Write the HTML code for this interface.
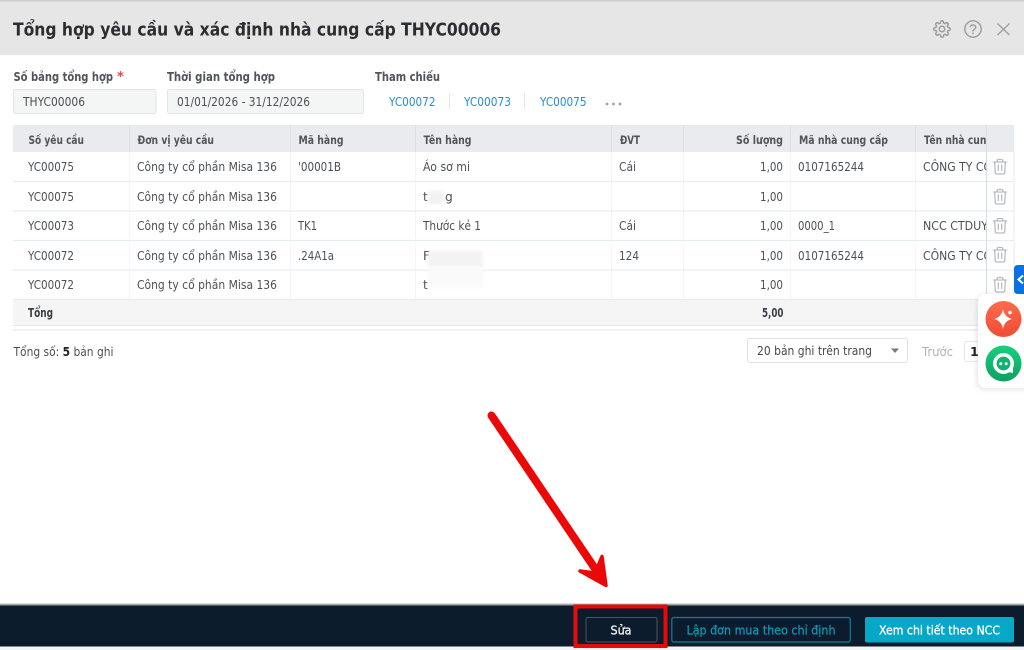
<!DOCTYPE html>
<html lang="vi"><head><meta charset="utf-8"><title>Tổng hợp yêu cầu</title>
<style>
html,body{margin:0;padding:0;background:#fff;overflow:hidden}
svg{display:block}
text{font-family:"DejaVu Sans","Liberation Sans",sans-serif;font-size:12.3px;fill:#4c5157}
.h{font-weight:bold;fill:#50555b;font-size:11.500px}
.l{font-weight:bold;fill:#50555b;font-size:12px}
.b{font-weight:bold;fill:#3a3f45}
.a{fill:#2a8bcb}
.v{stroke:#e9edf1;stroke-width:1;stroke-dasharray:1 1}
.r{stroke:#e6edf0;stroke-width:1.300}
</style></head><body>
<svg width="1024" height="650" viewBox="0 0 1024 650" xmlns="http://www.w3.org/2000/svg">
<defs>
<clipPath id="c"><rect x="900" y="125" width="86" height="180"/></clipPath>
<filter id="bl" x="-30%" y="-30%" width="160%" height="160%"><feGaussianBlur stdDeviation="1.500"/></filter>
<filter id="sh" x="-40%" y="-20%" width="180%" height="140%"><feDropShadow dx="-1" dy="1" stdDeviation="3" flood-color="#000" flood-opacity=".12"/></filter>
<linearGradient id="rg" x1="0" y1="0" x2="0" y2="1"><stop offset="0" stop-color="#ff6b4c"/><stop offset="1" stop-color="#ee4c35"/></linearGradient>
<linearGradient id="gg" x1="0" y1="0" x2="0" y2="1"><stop offset="0" stop-color="#12d27c"/><stop offset="1" stop-color="#10a062"/></linearGradient>
<g id="tr" fill="none" stroke="#b9bcbf" stroke-width="1.300" stroke-linecap="round" stroke-linejoin="round"><path d="M-6.500-5H6.500M-2.800-5V-6.300Q-2.800-7.500-1.500-7.500H1.500Q2.800-7.500 2.800-6.300V-5M-5.300-5-4.800 5.200Q-4.700 7-3 7H3Q4.700 7 4.800 5.200L5.300-5M-1.700-2V3.500M1.700-2V3.500"/></g>
</defs>
<rect width="1024" height="650" fill="#fff"/>
<!-- header -->
<rect width="1024" height="55" fill="#e6e6e6"/>
<rect width="1024" height="1.500" fill="#cfcfcf"/>
<text x="13" y="35.500" style="font-size:18px;font-weight:bold;fill:#2a2d31" textLength="488" lengthAdjust="spacingAndGlyphs">Tổng hợp yêu cầu và xác định nhà cung cấp THYC00006</text>
<g transform="translate(933 20) scale(.75)" fill="none" stroke="#9c9c9c" stroke-width="2"><circle cx="12" cy="12" r="3.600"/><path d="M19.400 15a1.650 1.650 0 0 0 .33 1.820l.06.06a2 2 0 0 1 0 2.830 2 2 0 0 1-2.830 0l-.06-.06a1.650 1.650 0 0 0-1.820-.33 1.650 1.650 0 0 0-1 1.510V21a2 2 0 0 1-2 2 2 2 0 0 1-2-2v-.09A1.650 1.650 0 0 0 9 19.400a1.650 1.650 0 0 0-1.820.33l-.06.06a2 2 0 0 1-2.830 0 2 2 0 0 1 0-2.830l.06-.06a1.650 1.650 0 0 0 .33-1.820 1.650 1.650 0 0 0-1.510-1H3a2 2 0 0 1-2-2 2 2 0 0 1 2-2h.09A1.650 1.650 0 0 0 4.600 9a1.650 1.650 0 0 0-.33-1.820l-.06-.06a2 2 0 0 1 0-2.830 2 2 0 0 1 2.830 0l.06.06a1.650 1.650 0 0 0 1.820.33H9a1.650 1.650 0 0 0 1-1.510V3a2 2 0 0 1 2-2 2 2 0 0 1 2 2v.09a1.650 1.650 0 0 0 1 1.510 1.650 1.650 0 0 0 1.820-.33l.06-.06a2 2 0 0 1 2.830 0 2 2 0 0 1 0 2.830l-.06.06a1.650 1.650 0 0 0-.33 1.820V9a1.650 1.650 0 0 0 1.510 1H21a2 2 0 0 1 2 2 2 2 0 0 1-2 2h-.09a1.650 1.650 0 0 0-1.510 1z"/></g>
<circle cx="973" cy="29" r="8.200" fill="none" stroke="#9c9c9c" stroke-width="1.400"/>
<path d="M970.300 26.800a2.800 2.800 0 0 1 5.400.6c0 1.800-2.700 2-2.700 3.600" fill="none" stroke="#9c9c9c" stroke-width="1.400" stroke-linecap="round"/>
<circle cx="973" cy="33.300" r=".9" fill="#9c9c9c"/>
<path d="M997.500 23.500 1009.500 35M1009.500 23.500 997.500 35" stroke="#a2a2a2" stroke-width="1.500" fill="none"/>
<!-- form -->
<text x="13.500" y="81" class="l" textLength="99.500" lengthAdjust="spacingAndGlyphs">Số bảng tổng hợp</text>
<text x="117" y="81" style="font-size:13px;font-weight:bold;fill:#e8473f">*</text>
<text x="167" y="81" class="l" textLength="108" lengthAdjust="spacingAndGlyphs">Thời gian tổng hợp</text>
<text x="375" y="81" class="l" textLength="65" lengthAdjust="spacingAndGlyphs">Tham chiếu</text>
<rect x="13.500" y="89.500" width="142.500" height="24" rx="2" fill="#f4f5f5" stroke="#e1e5e8"/>
<rect x="167.500" y="89.500" width="196" height="24" rx="2" fill="#f4f5f5" stroke="#e1e5e8"/>
<text x="23" y="106" textLength="62" lengthAdjust="spacingAndGlyphs">THYC00006</text>
<text x="177" y="106" textLength="133" lengthAdjust="spacingAndGlyphs">01/01/2026 - 31/12/2026</text>
<text x="389" y="106" class="a" textLength="46.500" lengthAdjust="spacingAndGlyphs">YC00072</text>
<text x="464" y="106" class="a" textLength="47" lengthAdjust="spacingAndGlyphs">YC00073</text>
<text x="540" y="106" class="a" textLength="46.500" lengthAdjust="spacingAndGlyphs">YC00075</text>
<path d="M449.500 93V109.500M524.500 93V109.500" stroke="#e3e6e8"/>
<g fill="#a8abae"><circle cx="607" cy="104" r="1.500"/><circle cx="613.500" cy="104" r="1.500"/><circle cx="620" cy="104" r="1.500"/></g>
<!-- table header -->
<rect x="13" y="125" width="1001" height="27" fill="#e9ebef"/>
<path d="M129.500 125V152M290.500 125V152M415.500 125V152M611.500 125V152M683.500 125V152M790.500 125V152M915.500 125V152M986.500 125V152" stroke="#dcdfe4" stroke-width="1"/>
<text x="28.500" y="144" class="h" textLength="55.500" lengthAdjust="spacingAndGlyphs">Số yêu cầu</text>
<text x="137.500" y="144" class="h" textLength="76.500" lengthAdjust="spacingAndGlyphs">Đơn vị yêu cầu</text>
<text x="298.500" y="144" class="h" textLength="45" lengthAdjust="spacingAndGlyphs">Mã hàng</text>
<text x="423.500" y="144" class="h" textLength="48" lengthAdjust="spacingAndGlyphs">Tên hàng</text>
<text x="620" y="144" class="h" textLength="20" lengthAdjust="spacingAndGlyphs">ĐVT</text>
<text x="736" y="144" class="h" textLength="47" lengthAdjust="spacingAndGlyphs">Số lượng</text>
<text x="799" y="144" class="h" textLength="89" lengthAdjust="spacingAndGlyphs">Mã nhà cung cấp</text>
<text x="924" y="144" class="h" clip-path="url(#c)" textLength="69" lengthAdjust="spacingAndGlyphs">Tên nhà cung</text>
<!-- grid -->
<path class="v" d="M129.500 152V299M290.500 152V299M415.500 152V299M611.500 152V299M683.500 152V299M790.500 152V299M915.500 152V299"/>
<path class="r" d="M13 181.500H1014M13 211H1014M13 240.500H1014M13 270H1014M13 299.500H986"/>
<path d="M986.500 125V299" stroke="#d8dee2" stroke-width="1.200"/>
<path d="M1014 152V299" stroke="#e6edf0"/>
<!-- rows -->
<g>
<text x="28" y="171" textLength="46" lengthAdjust="spacingAndGlyphs">YC00075</text>
<text x="137" y="171" textLength="140" lengthAdjust="spacingAndGlyphs">Công ty cổ phần Misa 136</text>
<text x="298" y="171" textLength="43" lengthAdjust="spacingAndGlyphs">'00001B</text>
<text x="423" y="171" textLength="47" lengthAdjust="spacingAndGlyphs">Áo sơ mi</text>
<text x="619" y="171" textLength="17" lengthAdjust="spacingAndGlyphs">Cái</text>
<text x="760" y="171" textLength="23" lengthAdjust="spacingAndGlyphs">1,00</text>
<text x="798" y="171" textLength="66" lengthAdjust="spacingAndGlyphs">0107165244</text>
<text x="923" y="171" clip-path="url(#c)" textLength="69" lengthAdjust="spacingAndGlyphs">CÔNG TY CỔ</text>

<text x="28" y="201" textLength="46" lengthAdjust="spacingAndGlyphs">YC00075</text>
<text x="137" y="201" textLength="140" lengthAdjust="spacingAndGlyphs">Công ty cổ phần Misa 136</text>
<text x="423" y="201">t</text>
<text x="445" y="201">g</text>
<text x="760" y="201" textLength="23" lengthAdjust="spacingAndGlyphs">1,00</text>

<text x="28" y="230" textLength="46" lengthAdjust="spacingAndGlyphs">YC00073</text>
<text x="137" y="230" textLength="140" lengthAdjust="spacingAndGlyphs">Công ty cổ phần Misa 136</text>
<text x="298" y="230" textLength="19" lengthAdjust="spacingAndGlyphs">TK1</text>
<text x="423" y="230" textLength="58" lengthAdjust="spacingAndGlyphs">Thước kẻ 1</text>
<text x="619" y="230" textLength="17" lengthAdjust="spacingAndGlyphs">Cái</text>
<text x="760" y="230" textLength="23" lengthAdjust="spacingAndGlyphs">1,00</text>
<text x="798" y="230" textLength="37" lengthAdjust="spacingAndGlyphs">0000_1</text>
<text x="923" y="230" clip-path="url(#c)" textLength="65" lengthAdjust="spacingAndGlyphs">NCC CTDUY</text>

<text x="28" y="260" textLength="46" lengthAdjust="spacingAndGlyphs">YC00072</text>
<text x="137" y="260" textLength="140" lengthAdjust="spacingAndGlyphs">Công ty cổ phần Misa 136</text>
<text x="298" y="260" textLength="36" lengthAdjust="spacingAndGlyphs">.24A1a</text>
<text x="423" y="260">F</text>
<text x="619" y="260" textLength="20" lengthAdjust="spacingAndGlyphs">124</text>
<text x="760" y="260" textLength="23" lengthAdjust="spacingAndGlyphs">1,00</text>
<text x="798" y="260" textLength="66" lengthAdjust="spacingAndGlyphs">0107165244</text>
<text x="923" y="260" clip-path="url(#c)" textLength="69" lengthAdjust="spacingAndGlyphs">CÔNG TY CỔ</text>

<text x="28" y="289" textLength="46" lengthAdjust="spacingAndGlyphs">YC00072</text>
<text x="137" y="289" textLength="140" lengthAdjust="spacingAndGlyphs">Công ty cổ phần Misa 136</text>
<text x="423" y="289">t</text>
<text x="760" y="289" textLength="23" lengthAdjust="spacingAndGlyphs">1,00</text>
</g>
<!-- blur patches -->
<rect x="428" y="191" width="16" height="13" fill="#f2f2f2" filter="url(#bl)"/>
<rect x="428" y="251" width="55" height="17" fill="#f3f3f3" filter="url(#bl)"/>
<rect x="428" y="266" width="55" height="22" fill="#fafafa" filter="url(#bl)"/>
<!-- trash -->
<use href="#tr" x="1000" y="167"/><use href="#tr" x="1000" y="197"/><use href="#tr" x="1000" y="226"/><use href="#tr" x="1000" y="255"/><use href="#tr" x="1000" y="285"/>
<!-- total -->
<rect x="13" y="300" width="1001" height="25" fill="#f5f5f5"/>
<path d="M13 325.500H1014" stroke="#e6e9eb"/>
<path d="M13 330H1014" stroke="#e8edf0" stroke-width="1.500"/>
<text x="28" y="317" class="b" textLength="25" lengthAdjust="spacingAndGlyphs">Tổng</text>
<text x="762" y="317" class="b" textLength="21.500" lengthAdjust="spacingAndGlyphs">5,00</text>
<!-- pagination -->
<text x="13.500" y="356" textLength="100" lengthAdjust="spacingAndGlyphs">Tổng số: <tspan style="font-weight:bold;fill:#222">5</tspan> bản ghi</text>
<rect x="747.500" y="338.500" width="160" height="24" rx="2" fill="#fff" stroke="#e0e3e6"/>
<text x="757" y="355" style="font-size:12.800px;fill:#44484d" textLength="115" lengthAdjust="spacingAndGlyphs">20 bản ghi trên trang</text>
<path d="M891 348.500H899L895 353Z" fill="#77797c"/>
<text x="922" y="356" style="fill:#b0b4b7" textLength="31" lengthAdjust="spacingAndGlyphs">Trước</text>
<rect x="964.500" y="341.500" width="30" height="20" rx="2" fill="#fff" stroke="#e4e7e9"/>
<text x="970" y="356" class="b" style="font-size:12.500px;fill:#222">1</text>
<!-- side widgets -->
<path d="M1024 265H1018Q1014 265 1014 269V290Q1014 294 1018 294H1024Z" fill="#0a70e4"/>
<path d="M1023 275.500 1018.500 279.500 1023 283.500" fill="none" stroke="#fff" stroke-width="2"/>
<rect x="978" y="294" width="60" height="94" rx="8" fill="#fff" filter="url(#sh)"/>
<circle cx="1003.500" cy="319" r="18" fill="url(#rg)"/>
<path d="M1003 309Q1004.300 317 1012 319Q1004.300 320.800 1003 329Q1001.700 320.800 994 319Q1001.700 317 1003 309Z" fill="#fff"/>
<circle cx="1010" cy="312.500" r="1.800" fill="#fff"/>
<circle cx="1003.500" cy="363.500" r="18" fill="url(#gg)"/>
<circle cx="1003.500" cy="363.500" r="8.700" fill="#10b26e" stroke="#fff" stroke-width="3.600"/>
<path d="M1008 368.500 1013 367 1013 373 1008 372Z" fill="#fff"/>
<circle cx="1000.800" cy="363.800" r="1.500" fill="#fff"/><circle cx="1006.200" cy="363.800" r="1.500" fill="#fff"/>
<!-- footer -->
<rect y="603" width="1024" height="1" fill="#dcdcdc"/>
<rect y="604" width="1024" height="1.500" fill="#a4a6a9"/>
<rect y="605.500" width="1024" height="41" fill="#0c1c2c"/>
<rect y="646.500" width="1024" height="3.500" fill="#f5f5f5"/>
<rect x="586" y="617.500" width="71" height="24.500" rx="2" fill="#0c1c2c" stroke="#4a5561"/>
<text x="610.500" y="634.500" style="fill:#f2f4f6;stroke:#f2f4f6;stroke-width:.3" textLength="21" lengthAdjust="spacingAndGlyphs">Sửa</text>
<rect x="671.800" y="617.500" width="178.500" height="24.500" rx="2" fill="#0c1c2c" stroke="#0b7f9c" stroke-width="1.200"/>
<text x="686.500" y="634.500" style="fill:#0a9dbc;stroke:#0a9dbc;stroke-width:.2" textLength="149" lengthAdjust="spacingAndGlyphs">Lập đơn mua theo chỉ định</text>
<rect x="865" y="617" width="149" height="25.500" rx="2" fill="#07a7c7"/>
<text x="879" y="634.500" style="fill:#fff;stroke:#fff;stroke-width:.3" textLength="121" lengthAdjust="spacingAndGlyphs">Xem chi tiết theo NCC</text>
<!-- annotation -->
<rect x="575.500" y="606.500" width="90" height="39.500" fill="none" stroke="#e60a0a" stroke-width="4"/>
<path d="M491.500 415.500 600 576" stroke="#ea0808" stroke-width="8" stroke-linecap="round" fill="none"/>
<path d="M602 556.500 606 585.500 580 571 595 573Z" fill="#ea0808" stroke="#ea0808" stroke-width="3.500" stroke-linejoin="round"/>
</svg>
</body></html>
